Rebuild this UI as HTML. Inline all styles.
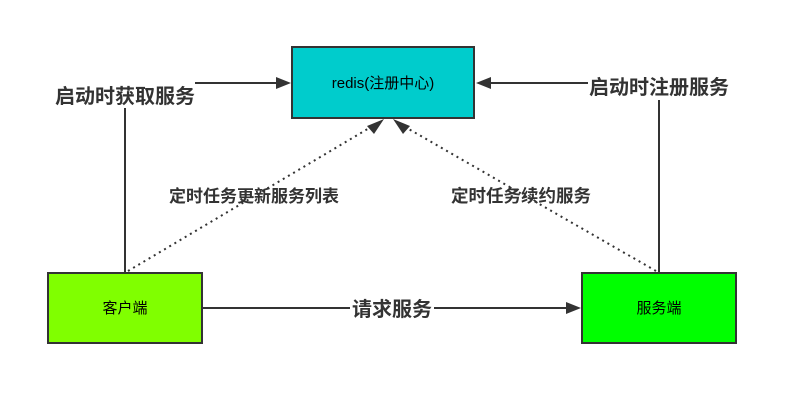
<!DOCTYPE html>
<html><head><meta charset="utf-8"><style>
html,body{margin:0;padding:0;background:#fff;width:798px;height:405px;overflow:hidden}
svg text{font-family:"Liberation Sans","Noto Sans CJK SC",sans-serif}
</style></head><body>
<svg width="798" height="405" xmlns="http://www.w3.org/2000/svg">
<g stroke="#333" stroke-width="2" fill="none">
<line x1="125" y1="273" x2="125" y2="108"/>
<line x1="195" y1="83" x2="280" y2="83"/>
<line x1="659" y1="273" x2="659" y2="100"/>
<line x1="588" y1="83" x2="488" y2="83"/>
<line x1="202" y1="308" x2="570" y2="308"/>
<line x1="128" y1="271" x2="376" y2="124" stroke-dasharray="2,4"/>
<line x1="656" y1="271" x2="400" y2="124" stroke-dasharray="2,4"/>
</g>
<g fill="#333">
<polygon points="291,83 276,77 276,89"/>
<polygon points="476,83 491,77 491,89"/>
<polygon points="581,308 566,302 566,314"/>
<polygon points="384,119 367,126 374,134"/>
<polygon points="393,119 403,134 410,126"/>
</g>
<rect x="292" y="47" width="182" height="71" fill="#00cccc" stroke="#333" stroke-width="2"/>
<rect x="48" y="273" width="154" height="70" fill="#80ff00" stroke="#333" stroke-width="2"/>
<rect x="582" y="273" width="154" height="70" fill="#00ff00" stroke="#333" stroke-width="2"/>
<g font-size="15" fill="#000" text-anchor="middle">
<text x="383" y="88">redis(注册中心)</text>
<text x="125" y="313">客户端</text>
<text x="659" y="313">服务端</text>
</g>
<rect x="350" y="296" width="84" height="24" fill="#fff"/>
<g font-weight="bold" fill="#333" text-anchor="middle">
<text x="125" y="103" font-size="20">启动时获取服务</text>
<text x="659" y="94" font-size="20">启动时注册服务</text>
<text x="392" y="316" font-size="20">请求服务</text>
<text x="254" y="202" font-size="17">定时任务更新服务列表</text>
<text x="521" y="202" font-size="17.5">定时任务续约服务</text>
</g>
</svg>
</body></html>
